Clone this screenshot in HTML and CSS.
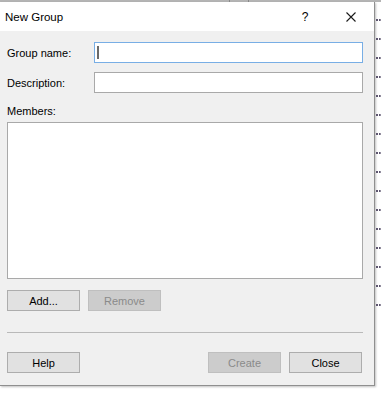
FILE: index.html
```html
<!DOCTYPE html>
<html lang="en">
<head>
  <meta charset="UTF-8">
  <title>New Group</title>
  <link rel="stylesheet" href="styles.css">
</head>
<body>

  <div class="edge"><span class="tick first"></span><span class="tick second"></span></div>

  <div class="screen">
    <div class="dialog">

      <div class="titlebar">
        <span class="title">New Group</span>
        <span class="caption-btn">?</span>
        <span class="caption-btn">
          <svg width="10" height="10" viewBox="0 0 10 10"><path d="M0.5 0.5 L9.5 9.5 M9.5 0.5 L0.5 9.5" stroke="#1a1a1a" stroke-width="1.1" fill="none"/></svg>
        </span>
      </div>

      <div class="content">
        <div class="field">
          <label>Group name:</label>
          <div class="textbox focused"><span class="caret"></span></div>
        </div>
        <div class="field second">
          <label>Description:</label>
          <div class="textbox"></div>
        </div>

        <div class="members-label">Members:</div>
        <div class="listbox"></div>

        <div class="btn-row">
          <button class="btn">Add...</button>
          <button class="btn" disabled>Remove</button>
        </div>

        <div class="separator"></div>

        <div class="footer">
          <button class="btn">Help</button>
          <span class="spacer"></span>
          <button class="btn" disabled>Create</button>
          <button class="btn">Close</button>
        </div>
      </div>

    </div>

    <div class="behind">
      <span class="dots"></span><span class="dots"></span><span class="dots"></span><span class="dots"></span>
      <span class="dots"></span><span class="dots"></span><span class="dots"></span><span class="dots"></span>
      <span class="dots"></span><span class="dots"></span><span class="dots"></span><span class="dots"></span>
      <span class="dots"></span><span class="dots"></span><span class="dots"></span><span class="dots"></span>
    </div>
  </div>

</body>
</html>
```

FILE: styles.css
```css
* {
  box-sizing: border-box;
}

body {
  margin: 0;
  background-color: #ffffff;
  font-family: "Liberation Sans", Arial, sans-serif;
  font-size: 11px;
  color: #000;
  width: 381px;
  height: 393px;
  overflow: hidden;
}

.edge {
  height: 2px;
  background-color: #b4b4b4;
  display: flex;
}

.tick {
  width: 1px;
  height: 2px;
  background-color: #8a8a8a;
}

.tick.first {
  margin-left: 229px;
}

.tick.second {
  margin-left: 18px;
}

.screen {
  display: flex;
}

.dialog {
  width: 375px;
  background-color: #f0f0f0;
  border-right: 1px solid #8f8f8f;
  border-bottom: 1px solid #8f8f8f;
  box-shadow: 1px 1px 2px rgba(0,0,0,0.25);
}

.titlebar {
  height: 29px;
  background-color: #fff;
  display: flex;
  align-items: center;
}

.title {
  flex: 1;
  padding-left: 5px;
  font-size: 11.5px;
}

.caption-btn {
  width: 46px;
  height: 29px;
  display: flex;
  align-items: center;
  justify-content: center;
  font-size: 12px;
}

.content {
  padding: 11px 11px 12px 7px;
  display: flex;
  flex-direction: column;
}

.field {
  display: grid;
  grid-template-columns: 87px 1fr;
  align-items: center;
  height: 21px;
}

.field.second {
  margin-top: 9px;
}

.textbox {
  height: 21px;
  background-color: #fff;
  border: 1px solid #a9a9a9;
  display: flex;
  align-items: center;
  padding-left: 2px;
}

.textbox.focused {
  border-color: #78aee5;
}

.caret {
  width: 2px;
  height: 13px;
  background-color: #6a6a6a;
}

.members-label {
  margin-top: 11px;
  height: 14px;
  line-height: 14px;
}

.listbox {
  margin-top: 4px;
  height: 157px;
  background-color: #fff;
  border: 1px solid #a9a9a9;
}

.btn-row {
  margin-top: 11px;
  display: flex;
  gap: 8px;
}

.btn {
  width: 73px;
  height: 21px;
  padding: 0;
  font-family: "Liberation Sans", Arial, sans-serif;
  font-size: 11px;
  color: #000;
  background-color: #e1e1e1;
  border: 1px solid #adadad;
  border-radius: 0;
}

.btn:disabled {
  background-color: #cccccc;
  border-color: #bfbfbf;
  color: #8a8a8a;
}

.separator {
  margin-top: 21px;
  height: 1px;
  background-color: #b9b9b9;
}

.footer {
  margin-top: 19px;
  display: flex;
  gap: 8px;
  padding-right: 1px;
}

.spacer {
  flex: 1;
}

.behind {
  flex: 1;
  display: flex;
  flex-direction: column;
  padding-top: 17px;
  padding-left: 1px;
}

.dots {
  width: 5px;
  height: 19px;
  border-top: 2px dotted #5e5670;
}
```
